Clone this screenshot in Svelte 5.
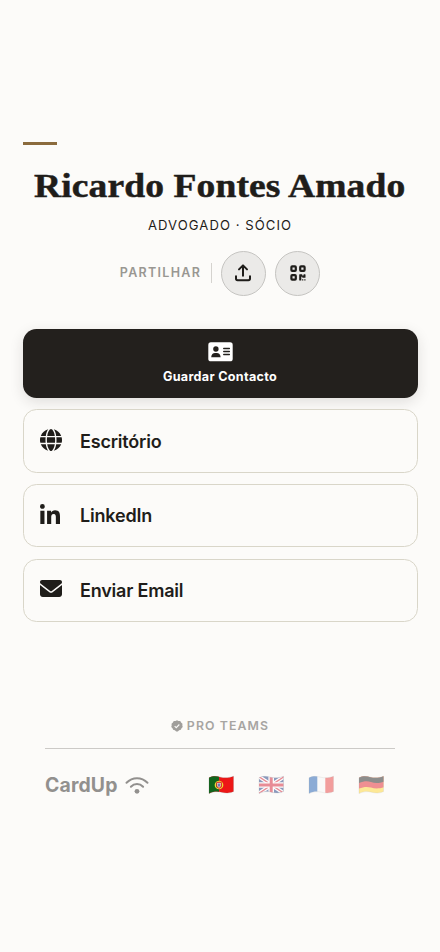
<script lang="ts">
	const links = [
		{ icon: 'globe', label: 'Escritório' },
		{ icon: 'linkedin', label: 'LinkedIn' },
		{ icon: 'mail', label: 'Enviar Email' }
	];

	const languages = [
		{ code: 'pt', label: 'Português' },
		{ code: 'en', label: 'English' },
		{ code: 'fr', label: 'Français' },
		{ code: 'de', label: 'Deutsch' }
	];

	let current = $state('pt');

	const wave = 'M1 2.8C5 .8 8.5 1.2 12.5 2.2S21 3 25.5 1.2V16.6C21 18.6 17.5 18.2 13.5 17.2S5 16.4 1 18.6Z';
</script>

<main>
	<header>
		<div class="accent"></div>
		<h1>Ricardo Fontes Amado</h1>
		<p class="role">ADVOGADO · SÓCIO</p>
		<div class="share">
			<span class="share-label">PARTILHAR</span>
			<button class="round" aria-label="Partilhar">
				<svg width="18" height="20" viewBox="0 0 18 20" fill="none" stroke="currentColor" stroke-width="2" stroke-linecap="round" stroke-linejoin="round">
					<path d="M9 12.8V2.6M5 6.4 9 2.4l4 4M2 13.2v2.4q0 1.6 1.6 1.6h10.8q1.6 0 1.6-1.6v-2.4" />
				</svg>
			</button>
			<button class="round" aria-label="Código QR">
				<svg width="16" height="16" viewBox="0 0 16 16">
					<g fill="none" stroke="currentColor" stroke-width="2.2">
						<rect x="1.4" y="1.4" width="4.4" height="4.4" rx=".8" />
						<rect x="10.2" y="1.4" width="4.4" height="4.4" rx=".8" />
						<rect x="1.4" y="10.2" width="4.4" height="4.4" rx=".8" />
					</g>
					<path fill="currentColor" d="M9.2 9.7q0-.5.5-.5h2.1q.5 0 .5.5v.8h1.2v-.8q0-.5.5-.5h1q.5 0 .5.5v2.6q0 .5-.5.5h-2.2q-.5 0-.5-.5v-.6h-1v3.4q0 .5-.5.5H9.7q-.5 0-.5-.5ZM12.1 14.2h1.2v1.3h-1.2ZM14.3 14.2h1.2v1.3h-1.2Z" />
				</svg>
			</button>
		</div>
	</header>

	<section class="actions">
		<button class="save">
			<svg width="25" height="20" viewBox="0 0 25 20">
				<rect x=".3" y=".3" width="24.4" height="19" rx="2.6" fill="#fff" />
				<circle cx="7.9" cy="7" r="2.7" fill="#23201d" />
				<path fill="#23201d" d="M3.2 15.3C3.2 12.4 5 11 7 11h1.8c2 0 3.8 1.4 3.8 4.3Z" />
				<path stroke="#23201d" stroke-width="1.3" stroke-linecap="round" d="M15.7 6.5h5.7M15.7 9.5h5.7M15.7 12.5h5.7" />
			</svg>
			<span>Guardar Contacto</span>
		</button>

		{#each links as link}
			<button class="link">
				<span class="link-icon">
					{#if link.icon === 'globe'}
						<svg width="22" height="22" viewBox="0 0 512 512" fill="currentColor">
							<path d="M352 256c0 22.2-1.2 43.6-3.3 64H163.3c-2.2-20.4-3.3-41.8-3.3-64s1.2-43.6 3.3-64h185.4c2.2 20.4 3.3 41.8 3.3 64zm28.8-64h123.1c5.3 20.5 8.1 41.9 8.1 64s-2.8 43.5-8.1 64H380.8c2.1-20.6 3.2-42 3.2-64s-1.1-43.4-3.2-64zm112.6-32H376.7c-10-63.9-29.8-117.4-55.3-151.6 78.3 20.7 142 77.5 172 151.6zm-149.1 0H167.7c6.1-36.4 15.5-68.6 27-94.7 10.5-23.6 22.2-40.7 33.5-51.5C239.4 3.2 248.7 0 256 0s16.6 3.2 27.8 13.8c11.3 10.8 23 27.9 33.5 51.5 11.6 26 20.9 58.2 27 94.7zm-209 0H18.6c30-74.1 93.7-130.9 172-151.6-25.5 34.2-45.3 87.7-55.3 151.6zM8.1 192h123.1c-2.1 20.6-3.2 42-3.2 64s1.1 43.4 3.2 64H8.1C2.8 299.5 0 278.1 0 256s2.8-43.5 8.1-64zm186.6 254.6c-11.6-26-20.9-58.2-27-94.6h176.6c-6.1 36.4-15.5 68.6-27 94.6-10.5 23.6-22.2 40.7-33.5 51.5C272.6 508.8 263.3 512 256 512s-16.6-3.2-27.8-13.8c-11.3-10.8-23-27.9-33.5-51.6zM135.3 352c10 63.9 29.8 117.4 55.3 151.6C112.3 482.9 48.6 426.1 18.6 352zm358.1 0c-30 74.1-93.7 130.9-172 151.6 25.5-34.2 45.3-87.7 55.3-151.6z" />
						</svg>
					{:else if link.icon === 'linkedin'}
						<svg width="20" height="20" viewBox="0 0 448 448" fill="currentColor">
							<path d="M100.3 448H7.4V148.9h92.9zM53.8 108.1C24.1 108.1 0 83.5 0 53.8a53.8 53.8 0 0 1 107.6 0c0 29.7-24.1 54.3-53.8 54.3zM447.9 448h-92.7V302.4c0-34.7-.7-79.2-48.3-79.2-48.3 0-55.7 37.7-55.7 76.7V448h-92.8V148.9h89.1v40.8h1.3c12.4-23.5 42.7-48.3 87.9-48.3 94 0 111.3 61.9 111.3 142.3z" />
						</svg>
					{:else}
						<svg width="22" height="17" viewBox="0 64 512 384" preserveAspectRatio="none" fill="currentColor">
							<path d="M48 64C21.5 64 0 85.5 0 112c0 15.1 7.1 29.3 19.2 38.4L236.8 313.6c11.4 8.5 27 8.5 38.4 0L492.8 150.4c12.1-9.1 19.2-23.3 19.2-38.4 0-26.5-21.5-48-48-48zM0 176v208c0 35.3 28.7 64 64 64h384c35.3 0 64-28.7 64-64V176L294.4 339.2c-22.8 17.1-54 17.1-76.8 0z" />
						</svg>
					{/if}
				</span>
				<span>{link.label}</span>
			</button>
		{/each}
	</section>

	<footer>
		<div class="plan">
			<svg width="12" height="12" viewBox="0 0 24 24">
				<path fill="#a09e9b" d="m12 .5 3 1.5 3.5.2 1.7 3 2.7 2.2-.2 3.4.8 3.3-2.5 2.4-1.3 3.2-3.4.8-2.7 2.5h-3.2l-2.7-2.5-3.4-.8L3 16.5.5 14.1l.8-3.3-.2-3.4 2.7-2.2 1.7-3L9 2Z" />
				<path fill="none" stroke="#fbfaf8" stroke-width="2.2" d="m7.3 12.2 3.2 3.2 6.2-6.4" />
			</svg>
			<span>PRO TEAMS</span>
		</div>
		<div class="bottom">
			<div class="brand">
				<span>CardUp</span>
				<svg width="24" height="18" viewBox="0 0 24 18" fill="none" stroke="currentColor" stroke-width="2" stroke-linecap="round">
					<path d="M1.5 6.8Q6 2.2 12 2.2T22.5 6.8M5.9 10.8Q8.5 8.1 12 8.1T18.1 10.800" />
					<circle cx="12" cy="15.3" r="2.4" fill="currentColor" stroke="none" />
				</svg>
			</div>
			<nav>
				{#each languages as lang}
					<button class="flag" class:active={current === lang.code} aria-label={lang.label} onclick={() => (current = lang.code)}>
						<svg width="27" height="20" viewBox="0 0 27 20">
							<defs>
								<clipPath id="wave-{lang.code}"><path d={wave} /></clipPath>
							</defs>
							<g clip-path="url(#wave-{lang.code})">
								{#if lang.code === 'pt'}
									<path fill="#ed1717" d="M0 0h27v20H0z" />
									<path fill="#11651c" d="M0 0h11v20H0z" />
									<circle cx="11" cy="10" r="3.7" fill="none" stroke="#eadb35" stroke-width="1.3" />
									<path fill="#f8eee5" stroke="#d72c25" stroke-width="1" d="M8.8 7.3h4.4v3.5q0 2-2.2 2.4-2.2-.4-2.2-2.4Z" />
									<path stroke="#304d9c" stroke-width=".9" d="M11 8.2v3.8M9.8 10h2.4" />
								{:else if lang.code === 'en'}
									<path fill="#12307d" d="M0 0h27v20H0z" />
									<path stroke="#fff" stroke-width="3.8" d="m0 1 27 18M0 19 27 1" />
									<path stroke="#d3162b" stroke-width="1.3" d="m0 1 27 18M0 19 27 1" />
									<path stroke="#fff" stroke-width="5.6" d="M13.2 0v20M0 10h27" />
									<path stroke="#d3162b" stroke-width="3" d="M13.2 0v20M0 10h27" />
								{:else if lang.code === 'fr'}
									<path fill="#f8f8f8" d="M0 0h27v20H0z" />
									<path fill="#1256b0" d="M0 0h9.3v20H0z" />
									<path fill="#e93838" d="M17.3 0H27v20h-9.7z" />
								{:else}
									<path fill="#ffd52b" d="M0 0h27v20H0z" />
									<path fill="#e31c23" d="M0 0h27v12C21 14 17 13.8 13 12.6S5 11.8 0 14Z" />
									<path fill="#171717" d="M0 0h27v6.3C21 8.5 17 8.3 13 7S5 6.3 0 8.5Z" />
								{/if}
							</g>
							<path d={wave} fill="none" stroke="#555" stroke-opacity=".25" stroke-width=".7" />
						</svg>
					</button>
				{/each}
			</nav>
		</div>
	</footer>
</main>

<style>
	:global(body) {
		background: #fcfbf9;
	}
	main {
		box-sizing: border-box;
		min-height: 952px;
		padding: 142px 22.5px 0;
		color: #1f1d1a;
		font-family: Inter, 'Liberation Sans', sans-serif;
	}
	button {
		margin: 0;
		padding: 0;
		border: 0;
		background: none;
		color: inherit;
		font: inherit;
		cursor: pointer;
	}
	svg {
		display: block;
	}
	header {
		display: flex;
		flex-direction: column;
		align-items: center;
	}
	.accent {
		align-self: flex-start;
		width: 34px;
		height: 3.4px;
		background: #8b6b3d;
	}
	h1 {
		margin: 19px 0 0;
		font: 700 34.5px/42px Georgia, 'Liberation Serif', serif;
		letter-spacing: 0.1px;
		white-space: nowrap;
		-webkit-text-stroke: 0.5px currentColor;
		transform: scaleX(1.088);
	}
	.role {
		margin: 9px 0 0;
		font-size: 13.1px;
		line-height: 20px;
		letter-spacing: 1.05px;
	}
	.share {
		display: flex;
		align-items: center;
		margin-top: 15.3px;
		gap: 9.3px;
	}
	.share-label {
		padding-right: 9.5px;
		border-right: 1px solid #d5d3cf;
		color: #999792;
		font-size: 12.5px;
		font-weight: 600;
		line-height: 20px;
		letter-spacing: 1.3px;
	}
	.round {
		display: grid;
		place-items: center;
		box-sizing: border-box;
		width: 45px;
		height: 45px;
		border: 1px solid #c5c4c1;
		border-radius: 50%;
		background: #ebeae8;
	}
	.actions {
		display: flex;
		flex-direction: column;
		gap: 11.3px;
		margin-top: 33.4px;
	}
	.save {
		display: flex;
		flex-direction: column;
		align-items: center;
		justify-content: center;
		gap: 7px;
		height: 69px;
		border-radius: 13.5px;
		background: #23201d;
		box-shadow: 0 4px 14px rgba(35, 32, 29, 0.13);
		color: #fff;
		font-size: 12.6px;
		font-weight: 700;
		line-height: 16px;
		letter-spacing: 0.3px;
	}
	.link {
		display: flex;
		align-items: center;
		box-sizing: border-box;
		height: 63.3px;
		padding: 0 16.5px;
		border: 1px solid #d9d6c9;
		border-radius: 13.5px;
		background: #fcfbf9;
		font-size: 18px;
		font-weight: 600;
		letter-spacing: -0.2px;
	}
	.link-icon {
		width: 40px;
		padding-bottom: 3px;
	}
	footer {
		margin: 95px 22.5px 0;
	}
	.plan {
		display: flex;
		align-items: center;
		justify-content: center;
		gap: 4px;
		padding-bottom: 13px;
		border-bottom: 1px solid #cccac7;
		color: #a7a5a2;
		font-size: 12.3px;
		font-weight: 600;
		line-height: 18px;
		letter-spacing: 1.1px;
	}
	.bottom {
		display: flex;
		align-items: center;
		justify-content: space-between;
		padding: 24.5px 10.5px 0 0;
	}
	.brand {
		display: flex;
		align-items: center;
		gap: 7px;
		color: #92908e;
		font-size: 19.4px;
		font-weight: 700;
		line-height: 24px;
		letter-spacing: 0.15px;
	}
	nav {
		display: flex;
		gap: 22.7px;
	}
	.flag {
		opacity: 0.48;
	}
	.flag.active {
		opacity: 1;
	}
</style>
